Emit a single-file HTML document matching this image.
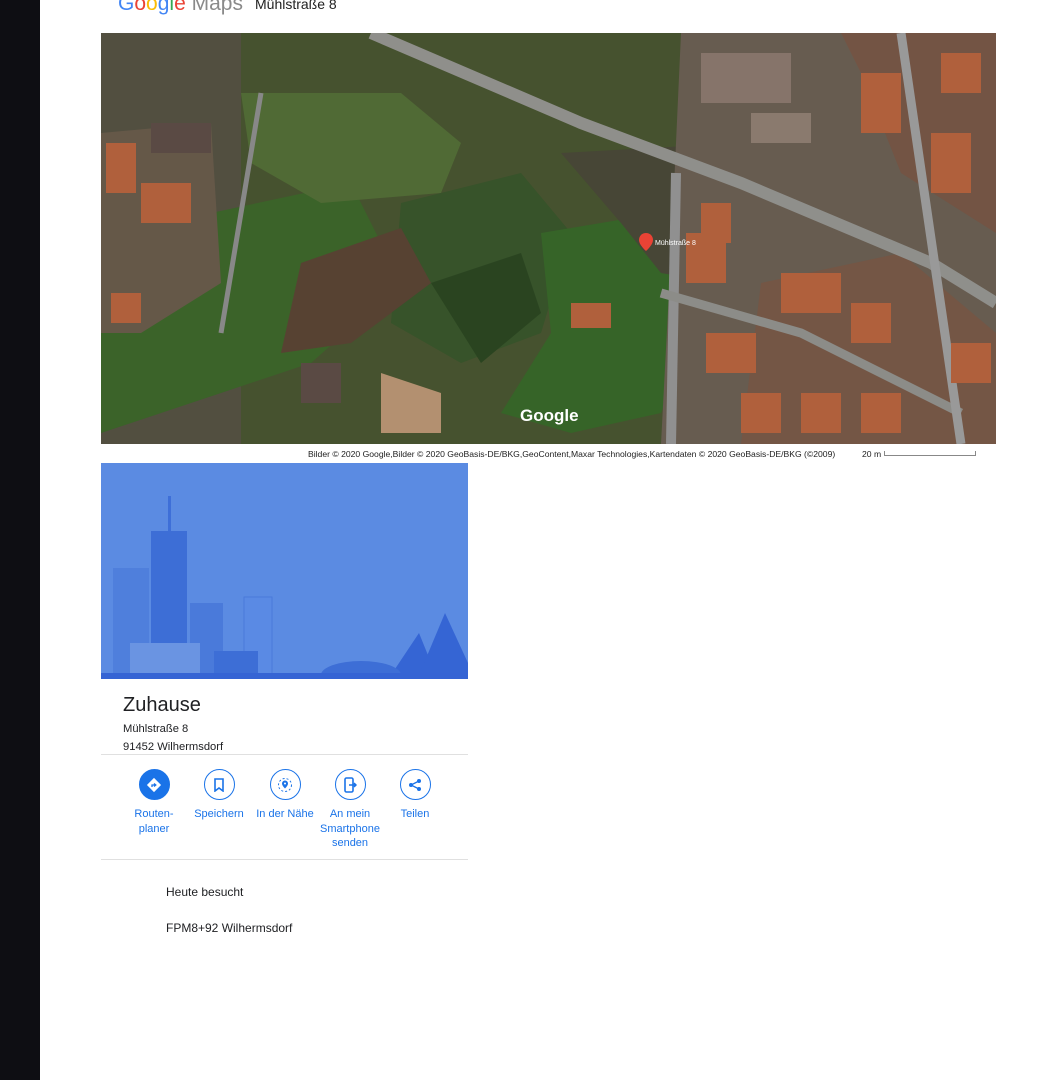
<!DOCTYPE html>
<html><head><meta charset="utf-8"><style>
body{margin:0;width:1040px;height:1080px;background:#fff;position:relative;overflow:hidden;font-family:"Liberation Sans",Arial,sans-serif}
.bar{position:absolute;left:0;top:0;width:40px;height:1080px;background:#0e0e13}
.abs{position:absolute}
.act{position:absolute;top:769px;width:70px;text-align:center;color:#1a73e8;font-size:11px;line-height:14.5px}
.act .c{width:31px;height:31px;border:1px solid #1a73e8;border-radius:50%;margin:0 auto 7px;box-sizing:border-box;display:flex;align-items:center;justify-content:center}
</style></head><body>
<div class="bar"></div>
<div class="abs" style="left:118px;top:-8px;font-size:21px;color:#5f6368;white-space:nowrap"><span style="color:#4285f4">G</span><span style="color:#ea4335">o</span><span style="color:#fbbc05">o</span><span style="color:#4285f4">g</span><span style="color:#34a853">l</span><span style="color:#ea4335">e</span> <span style="color:#8a8a8a">Maps</span></div>
<div class="abs" style="left:255px;top:-4px;font-size:14px;color:#222">Mühlstraße 8</div>
<svg class="abs" style="left:101px;top:33px" width="895" height="411" viewBox="0 0 895 411">
<rect width="895" height="411" fill="#46522f"/>
<rect x="0" y="0" width="140" height="411" fill="#524f40"/>
<polygon points="110,180 250,150 300,250 210,330 120,360 0,400 0,260" fill="#3b6329"/>
<polygon points="140,60 300,60 360,110 340,160 220,170 150,130" fill="#506a35"/>
<polygon points="300,170 420,140 470,200 440,300 360,330 290,290" fill="#37532a"/>
<polygon points="200,230 300,195 330,250 250,310 180,320" fill="#574232"/>
<polygon points="330,250 420,220 440,280 380,330" fill="#2a4420"/>
<polygon points="440,200 560,180 600,280 560,380 470,400 400,380 450,300" fill="#366428"/>
<polygon points="280,340 340,360 340,400 280,400" fill="#b39070"/>
<polygon points="460,120 640,110 670,200 620,250 560,240 520,190" fill="#474636"/>
<polygon points="0,100 110,90 120,250 40,300 0,300" fill="#655848"/>
<polygon points="580,0 895,0 895,411 560,411 570,220" fill="#675c50"/>
<polygon points="740,0 895,0 895,200 800,140 760,40" fill="#735444"/>
<polygon points="660,250 800,220 895,300 895,411 640,411" fill="#745645"/>
<path d="M270,0 L480,90 L640,150 L830,230 L895,270" stroke="#8f8f8b" stroke-width="12" fill="none"/>
<path d="M575,140 L570,411" stroke="#909090" stroke-width="10" fill="none"/>
<path d="M560,260 L700,300 L860,380" stroke="#8c8c88" stroke-width="9" fill="none"/>
<path d="M800,0 L860,411" stroke="#999" stroke-width="9" fill="none"/>
<path d="M160,60 L120,300" stroke="#888" stroke-width="5" fill="none"/>
<g fill="#b0603c">
<rect x="5" y="110" width="30" height="50"/><rect x="40" y="150" width="50" height="40"/><rect x="10" y="260" width="30" height="30"/>
<rect x="600" y="170" width="30" height="40"/><rect x="585" y="200" width="40" height="50"/><rect x="605" y="300" width="50" height="40"/>
<rect x="640" y="360" width="40" height="40"/><rect x="680" y="240" width="60" height="40"/><rect x="750" y="270" width="40" height="40"/>
<rect x="760" y="40" width="40" height="60"/><rect x="830" y="100" width="40" height="60"/><rect x="850" y="310" width="40" height="40"/>
<rect x="610" y="20" width="80" height="30"/><rect x="470" y="270" width="40" height="25"/><rect x="840" y="20" width="40" height="40"/>
<rect x="700" y="360" width="40" height="40"/><rect x="760" y="360" width="40" height="40"/>
</g>
<g fill="#5a4a44"><rect x="600" y="20" width="90" height="50" fill="#86746a"/><rect x="650" y="80" width="60" height="30" fill="#8a7a6e"/><rect x="50" y="90" width="60" height="30"/><rect x="200" y="330" width="40" height="40"/></g>
<path d="M545,200 c-4,0 -7,3 -7,7 c0,5 7,11 7,11 c0,0 7,-6 7,-11 c0,-4 -3,-7 -7,-7z" fill="#ea4335"/>
<text x="419" y="388" font-family="Liberation Sans" font-size="17" fill="#fff" font-weight="bold">Google</text>
<text x="554" y="212" font-size="7" fill="#fff" font-family="Liberation Sans">Mühlstraße 8</text>
</svg>
<div class="abs" style="left:308px;top:449px;font-size:8.6px;color:#222;white-space:nowrap">Bilder © 2020 Google,Bilder © 2020 GeoBasis-DE/BKG,GeoContent,Maxar Technologies,Kartendaten © 2020 GeoBasis-DE/BKG (©2009)</div>
<div class="abs" style="left:862px;top:449px;font-size:8.6px;color:#222">20 m</div>
<div class="abs" style="left:884px;top:451px;width:90px;height:4px;border:1px solid #888;border-top:none"></div>
<svg class="abs" style="left:101px;top:463px" width="367" height="216" viewBox="0 0 367 216">
<rect width="367" height="216" fill="#5b8be2"/>
<rect x="12" y="105" width="36" height="107" fill="#4f7fdc"/>
<rect x="67" y="33" width="3" height="38" fill="#3e6fd8"/>
<rect x="50" y="68" width="36" height="144" fill="#3d6ed6"/>
<rect x="89" y="140" width="33" height="72" fill="#4a7ada"/>
<rect x="143" y="134" width="28" height="78" fill="#5a8ae4" stroke="#4a7ada"/>
<rect x="29" y="180" width="70" height="32" fill="#6a94e2"/>
<rect x="113" y="188" width="44" height="24" fill="#3d6ed6"/>
<polygon points="290,212 318,170 335,212" fill="#3565d4"/>
<polygon points="318,212 344,150 367,200 367,212" fill="#3565d4"/>
<ellipse cx="260" cy="212" rx="40" ry="14" fill="#3d6ed6"/>
<rect y="210" width="367" height="6" fill="#3564d4"/>
</svg>
<div class="abs" style="left:123px;top:694px;font-size:20px;color:#202124">Zuhause</div>
<div class="abs" style="left:123px;top:723px;font-size:11.2px;color:#202124">Mühlstraße 8</div>
<div class="abs" style="left:123px;top:741px;font-size:11.2px;color:#202124">91452 Wilhermsdorf</div>
<div class="abs" style="left:101px;top:754px;width:367px;height:1px;background:#e0e0e0"></div>
<div class="act" style="left:119px"><div class="c" style="background:#1a73e8"><svg width="16" height="16" viewBox="0 0 16 16"><rect x="3" y="3" width="10" height="10" transform="rotate(45 8 8)" fill="#fff"/><path d="M6 10V8h3.5M8 6.5l1.8 1.5L8 9.5" stroke="#1a73e8" stroke-width="1.3" fill="none"/></svg></div>Routen-<br>planer</div>
<div class="act" style="left:184px"><div class="c"><svg width="12" height="14"><path d="M2 1h8v12l-4-3-4 3z" stroke="#1a73e8" stroke-width="1.6" fill="none"/></svg></div>Speichern</div>
<div class="act" style="left:250px"><div class="c"><svg width="16" height="16"><circle cx="8" cy="8" r="6.5" stroke="#1a73e8" stroke-dasharray="2 2" fill="none"/><path d="M8 3.5a3 3 0 0 1 3 3c0 2.2-3 5-3 5s-3-2.8-3-5a3 3 0 0 1 3-3z" fill="#1a73e8"/><circle cx="8" cy="6.5" r="1" fill="#fff"/></svg></div>In der Nähe</div>
<div class="act" style="left:315px"><div class="c"><svg width="14" height="16"><rect x="2" y="1" width="8" height="14" rx="1.5" stroke="#1a73e8" stroke-width="1.6" fill="none"/><path d="M6 8h7M11 6l2 2-2 2" stroke="#1a73e8" stroke-width="1.5" fill="none"/></svg></div>An mein<br>Smartphone<br>senden</div>
<div class="act" style="left:380px"><div class="c"><svg width="14" height="14"><circle cx="11" cy="3" r="2" fill="#1a73e8"/><circle cx="3" cy="7" r="2" fill="#1a73e8"/><circle cx="11" cy="11" r="2" fill="#1a73e8"/><path d="M11 3L3 7l8 4" stroke="#1a73e8" stroke-width="1.3" fill="none"/></svg></div>Teilen</div>
<div class="abs" style="left:101px;top:859px;width:367px;height:1px;background:#e0e0e0"></div>
<div class="abs" style="left:166px;top:885px;font-size:12px;color:#202124">Heute besucht</div>
<div class="abs" style="left:166px;top:921px;font-size:12px;color:#202124">FPM8+92 Wilhermsdorf</div>
</body></html>
